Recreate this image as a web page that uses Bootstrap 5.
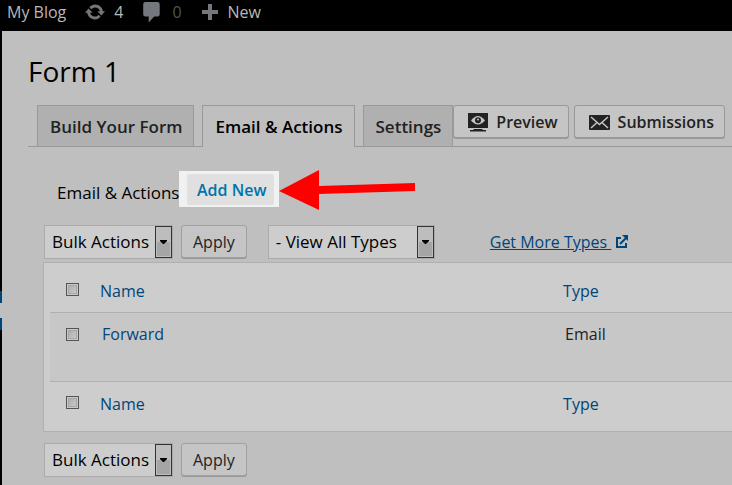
<!DOCTYPE html>
<html lang="en">
<head>
<meta charset="utf-8">
<meta name="viewport" content="width=device-width, initial-scale=1">
<title>Form 1 - My Blog</title>
<link href="https://cdn.jsdelivr.net/npm/bootstrap@5.3.0/dist/css/bootstrap.min.css" rel="stylesheet">
<style>
body{background:#bfbfbf;color:#000;font:16px/24px "Open Sans","Noto Sans",sans-serif;overflow-x:hidden}
a{color:#00457a}
.admin-bar{background:#000;height:31px;padding:0 0 7px 7px;gap:18px}
.admin-bar a{color:#b8b8b8;text-decoration:none;gap:8px}
.admin-bar a.idle{color:#515457;gap:9px}
.admin-bar svg{fill:#74787c}
.side-rail{width:2px;background:#000;padding-top:260px}
.side-rail span{display:block;height:39px;background:linear-gradient(#00457a 12px,#bfbfbf 12px 27px,#00457a 27px)}
.page-title{font-size:28px;line-height:36px;margin:22px 0 16px 26px;font-weight:400}
.form-tabs{margin-left:26px;padding-left:9px;border-bottom:1px solid #999;flex-wrap:nowrap}
.form-tabs .nav-link{height:42px;margin-right:8px;padding:9px 11px 8px 12px;border:1px solid #999;border-bottom:0;border-radius:0;background:#b0b0b0;color:#222;font-size:17px;font-weight:600;white-space:nowrap}
.form-tabs .nav-link.active{background:#bfbfbf;color:#000;border-color:#999;border-bottom:0}
.form-tabs .nav-item{margin-bottom:-1px}
.form-tabs .nav-item:not(:has(.active)) .nav-link{height:41px}
.form-tabs .last-tab .nav-link{margin-right:0}
.wp-btn{background:#c5c5c5;border:1px solid #999;border-radius:3px;box-shadow:0 1px 0 #999;color:#222;font:inherit;height:33px;padding:0 11px;white-space:nowrap}
.wp-btn.soft{border-color:#a0a0a0}
.tab-btn{font-weight:600;margin-right:5px;padding:0 10px 0 14px;gap:8px}
.tab-btn svg{fill:#222}
.section-head{margin:24px 0 18px 55px}
.section-head h2{font-size:17px;line-height:24px;margin:0;padding-top:10px;font-weight:400;width:122px;white-space:nowrap}
.spotlight{background:#f1f1f1;padding:3px 5px 2px 8px;height:36px}
.spotlight a{display:block;background:#e0e0e0;color:#0073aa;border-radius:2px;font-weight:600;text-decoration:none;padding:4px 8px 3px 10px;white-space:nowrap}
.arrow{position:absolute;left:100%;top:-1px}
.wp-select{appearance:none;border:1px solid #aaa;border-radius:0;color:#000;font:inherit;font-size:17px;height:34px;width:129px;padding:0 20px 0 7px;
background:#cdcdcd url("data:image/svg+xml,%3Csvg xmlns='http://www.w3.org/2000/svg' width='17' height='32'%3E%3Crect x='.5' y='.5' width='16' height='31' fill='%23bdbdbd' stroke='%23333'/%3E%3Crect x='2' y='16' width='13' height='14' fill='%23a5a5a5'/%3E%3Cpath d='M5 14h7v1l-3 3h-1l-3-3z'/%3E%3C/svg%3E") no-repeat right 0 top 0}
.wp-select.types{width:167px;margin-left:21px}
.more-types{margin-left:55px;padding-top:5px}
.toolbar{margin-left:42px;min-height:34px}
.list-box{margin:3px 0 11px 41px;border:1px solid #b0b0b0;border-right:0;background:#cdcdcd;padding-left:6px}
.list-box table{width:100%;table-layout:fixed;border-collapse:collapse}
.list-box th,.list-box td{font-weight:400;padding:0;vertical-align:top;text-align:left}
.list-box thead th{padding:16px 0 9px}
.list-box tfoot th{padding:10px 0 15px}
.list-box td{padding:9px 0 35px 2px;color:#222}
.list-box thead tr{border-bottom:1px solid #b0b0b0}
.list-box tfoot tr{border-top:1px solid #b0b0b0}
.list-box tbody{background:#c7c7c7}
.list-box .pick{width:50px;padding-left:16px}
.list-box .kind{width:169px}
.list-box a{text-decoration:none}
.pick input{appearance:none;display:block;width:13px;height:13px;border:1px solid #555;background:linear-gradient(135deg,#a4a8ac,#cfcfcf);box-shadow:inset 0 0 0 1px #c9c9c9,inset 0 0 0 2px #a4a6a8;margin:4px 0 0}
td.pick input{margin-top:6px}
</style>
<script src="https://cdn.jsdelivr.net/npm/bootstrap@5.3.0/dist/js/bootstrap.bundle.min.js" defer></script>
</head>
<body class="min-vh-100 d-flex flex-column">
<header class="admin-bar d-flex align-items-center">
  <a href="#">My Blog</a>
  <a href="#" class="d-flex align-items-center" aria-label="4 updates">
    <svg width="22" height="22" viewBox="0 0 20 20"><path d="M10.200 3.280c3.530 0 6.430 2.610 6.920 6h2.080l-3.500 4-3.500-4h2.320c-.45-1.970-2.210-3.450-4.320-3.450-1.450 0-2.730.71-3.540 1.780L4.950 5.660C6.230 4.200 8.110 3.280 10.200 3.280zm-.4 13.440c-3.520 0-6.430-2.610-6.920-6H.8l3.500-4c1.170 1.330 2.330 2.670 3.500 4H5.480c.45 1.970 2.210 3.450 4.320 3.450 1.450 0 2.730-.71 3.540-1.780l1.710 1.950c-1.280 1.460-3.150 2.380-5.250 2.380z"/></svg>4</a>
  <a href="#" class="idle d-flex align-items-center" aria-label="0 comments">
    <svg width="22" height="22" viewBox="0 0 20 20"><path d="M4 1h11q2 0 2 2v9q0 2-2 2h-3l-5 5.500V14H4q-2 0-2-2V3q0-2 2-2z"/></svg>0</a>
  <a href="#" class="d-flex align-items-center">
    <svg width="20" height="18" viewBox="0 0 20 18"><path d="M8 1h4v6h6v4h-6v6H8v-6H2V7h6z"/></svg>New</a>
</header>
<div class="d-flex flex-grow-1">
  <aside class="side-rail flex-shrink-0"><span></span></aside>
  <main class="flex-grow-1">
    <h1 class="page-title">Form 1</h1>
    <ul class="nav form-tabs">
      <li class="nav-item"><a class="nav-link" href="#">Build Your Form</a></li>
      <li class="nav-item"><a class="nav-link active" aria-current="page" href="#">Email &amp; Actions</a></li>
      <li class="nav-item last-tab"><a class="nav-link" href="#">Settings</a></li>
      <li><button type="button" class="wp-btn tab-btn d-flex align-items-center">
        <svg width="20" height="20" viewBox="0 0 20 20"><path fill-rule="evenodd" d="M0 1h20v15H0zM3 8.500q7-9 14 0-7 8-14 0z"/><circle cx="10" cy="8.300" r="3"/><circle cx="10" cy="7.500" r="1" fill="#bfbfbf"/><path d="M6 17h8l1 1h3v1.500H2V18h3z"/></svg>Preview</button></li>
      <li><button type="button" class="wp-btn tab-btn d-flex align-items-center">
        <svg width="21" height="16" viewBox="0 0 21 16"><rect width="21" height="15" y="1" rx="1"/><path d="M2 3l8.500 7.500L19 3M2 14l6-5.500M19 14l-6-5.500" fill="none" stroke="#c5c5c5" stroke-width="1.500"/></svg>Submissions</button></li>
    </ul>
    <div class="section-head d-flex">
      <h2>Email &amp; Actions</h2>
      <div class="spotlight position-relative">
        <a href="#">Add New</a>
        <svg class="arrow" width="138" height="41" viewBox="0 0 138 41" aria-hidden="true"><path fill="#f00" d="M0 21L40 0V16L136 13V21L40 24V40z"/></svg>
      </div>
    </div>
    <div class="toolbar d-flex">
      <select class="wp-select" aria-label="Bulk actions"><option>Bulk Actions</option></select>
      <button type="button" class="wp-btn soft ms-2">Apply</button>
      <select class="wp-select types" aria-label="Filter by type"><option>- View All Types</option></select>
      <a href="#" class="more-types text-nowrap">Get More Types&nbsp;</a>
      <svg class="mt-2 ms-1" width="16" height="16" viewBox="1 0 16 16" fill="none" stroke="#00457a" stroke-width="2"><path d="M7 5H3v9h9v-4"/><path d="M6 11l6-6"/><path d="M8 2h6v6z" fill="#00457a" stroke="none"/></svg>
    </div>
    <div class="list-box">
      <table>
        <thead><tr><th class="pick"><input type="checkbox" aria-label="Select all"></th><th><a href="#">Name</a></th><th class="kind"><a href="#">Type</a></th></tr></thead>
        <tbody><tr><td class="pick"><input type="checkbox" aria-label="Select Forward"></td><td><a href="#">Forward</a></td><td class="kind">Email</td></tr></tbody>
        <tfoot><tr><th class="pick"><input type="checkbox" aria-label="Select all"></th><th><a href="#">Name</a></th><th class="kind"><a href="#">Type</a></th></tr></tfoot>
      </table>
    </div>
    <div class="toolbar d-flex">
      <select class="wp-select" aria-label="Bulk actions, bottom"><option>Bulk Actions</option></select>
      <button type="button" class="wp-btn soft ms-2">Apply</button>
    </div>
  </main>
</div>
</body>
</html>
